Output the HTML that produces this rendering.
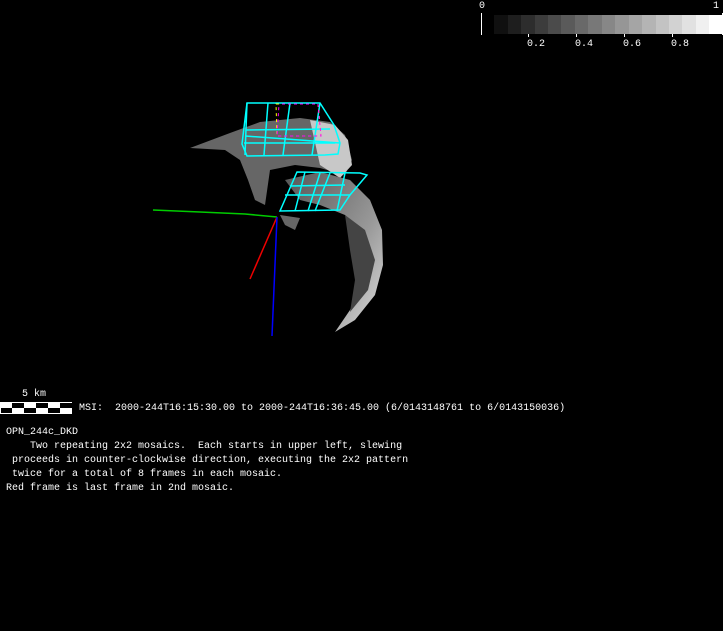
<!DOCTYPE html>
<html><head><style>
body{margin:0;width:723px;height:631px;background:#000;overflow:hidden;position:relative;font-family:"Liberation Mono",monospace;color:#fff}
.t{position:absolute;font-size:10px;line-height:14px;white-space:pre}
</style></head><body>
<svg width="723" height="631" style="position:absolute;left:0;top:0">
<defs>
<linearGradient id="a" x1="0" x2="1" y1="0" y2="1">
<stop offset="0" stop-color="#555"/><stop offset="0.6" stop-color="#999"/><stop offset="1" stop-color="#ddd"/>
</linearGradient>
</defs>
<g>
<rect x="494" y="15" width="14" height="19" fill="#101010"/><rect x="508" y="15" width="13" height="19" fill="#1e1e1e"/><rect x="521" y="15" width="14" height="19" fill="#2d2d2d"/><rect x="535" y="15" width="13" height="19" fill="#3c3c3c"/><rect x="548" y="15" width="13" height="19" fill="#4b4b4b"/><rect x="561" y="15" width="14" height="19" fill="#5a5a5a"/><rect x="575" y="15" width="13" height="19" fill="#696969"/><rect x="588" y="15" width="14" height="19" fill="#787878"/><rect x="602" y="15" width="13" height="19" fill="#878787"/><rect x="615" y="15" width="14" height="19" fill="#969696"/><rect x="629" y="15" width="13" height="19" fill="#a5a5a5"/><rect x="642" y="15" width="14" height="19" fill="#b4b4b4"/><rect x="656" y="15" width="13" height="19" fill="#c3c3c3"/><rect x="669" y="15" width="13" height="19" fill="#d2d2d2"/><rect x="682" y="15" width="14" height="19" fill="#e1e1e1"/><rect x="696" y="15" width="13" height="19" fill="#f0f0f0"/><rect x="709" y="15" width="13" height="19" fill="#fff"/>
<line x1="481.5" y1="13" x2="481.5" y2="35" stroke="#fff"/>
<line x1="722.5" y1="13" x2="722.5" y2="35" stroke="#fff"/>
<line x1="528.5" y1="34" x2="528.5" y2="37" stroke="#fff"/><line x1="576.5" y1="34" x2="576.5" y2="37" stroke="#fff"/><line x1="624.5" y1="34" x2="624.5" y2="37" stroke="#fff"/><line x1="672.5" y1="34" x2="672.5" y2="37" stroke="#fff"/>
</g>
<path d="M190,148 L230,133 L260,122 L300,118 L330,122 L345,135 L352,160 L345,175 L320,168 L295,165 L270,170 L265,205 L255,200 L248,180 L240,160 L225,150 Z" fill="#666"/>
<path d="M310,120 L335,125 L348,140 L352,165 L340,178 L320,165 Z" fill="#c8c8c8"/>
<path d="M285,180 L320,172 L350,180 L370,200 L382,230 L383,265 L375,295 L355,320 L335,332 L350,310 L362,285 L368,255 L360,230 L345,215 L320,205 L300,200 Z" fill="url(#a)"/>
<path d="M345,215 L365,230 L375,260 L368,290 L350,312 L355,280 L350,250 Z" fill="#444"/>
<path d="M280,215 L300,218 L295,230 L285,225 Z" fill="#666"/>
<polyline points="153,210 200,212 245,214 277,217" fill="none" stroke="#0c0" stroke-width="1.5"/>
<line x1="277" y1="217" x2="250" y2="279" stroke="#e00" stroke-width="1.5"/>
<line x1="277" y1="217" x2="272" y2="336" stroke="#00f" stroke-width="1.5"/>
<g fill="none" stroke="#0ff" stroke-width="1.5">
<path d="M247,103 L320,103 L334,125 L340,143 L338,154 L325,155 L247,156 L242,144 Z"/>
<path d="M247,103 L245,155 M268,103 L264,155 M290,103 L283,155 M320,103 L312,155"/>
<path d="M246,130 L330,129 M245,136 L340,143 M244,143 L335,143"/>
<path d="M297,172 L360,173 L367,175 L350,195 L340,210 L280,211 Z"/>
<path d="M290,186 L345,185 M285,195 L350,195 M305,172 L295,211 M320,173 L308,211 M330,173 L315,211 M345,173 L337,211"/>
</g>
<path d="M276,104 L318,104 L321,136 L277,136 Z" fill="none" stroke="#ff0" stroke-dasharray="3,3" stroke-width="1"/>
<path d="M279,104 L318,104 L321,136 L277,136 Z" fill="none" stroke="#f0f" stroke-dasharray="3,3" stroke-dashoffset="3" stroke-width="1"/>
<rect x="0" y="402" width="72" height="12" fill="#fff"/>
<rect x="12" y="403" width="12" height="5" fill="#000"/><rect x="36" y="403" width="12" height="5" fill="#000"/><rect x="60" y="403" width="12" height="5" fill="#000"/>
<rect x="1" y="408" width="11" height="5" fill="#000"/><rect x="24" y="408" width="12" height="5" fill="#000"/><rect x="48" y="408" width="12" height="5" fill="#000"/>
</svg>
<div class="t" style="left:479px;top:0px">0</div>
<div class="t" style="left:713px;top:0px">1</div>
<div class="t" style="left:527px;top:38px">0.2</div>
<div class="t" style="left:575px;top:38px">0.4</div>
<div class="t" style="left:623px;top:38px">0.6</div>
<div class="t" style="left:671px;top:38px">0.8</div>
<div class="t" style="left:22px;top:388px">5 km</div>
<div class="t" style="left:79px;top:402px">MSI:  2000-244T16:15:30.00 to 2000-244T16:36:45.00 (6/0143148761 to 6/0143150036)</div>
<div class="t" style="left:6px;top:426px">OPN_244c_DKD
    Two repeating 2x2 mosaics.  Each starts in upper left, slewing
 proceeds in counter-clockwise direction, executing the 2x2 pattern
 twice for a total of 8 frames in each mosaic.
Red frame is last frame in 2nd mosaic.</div>
</body></html>
